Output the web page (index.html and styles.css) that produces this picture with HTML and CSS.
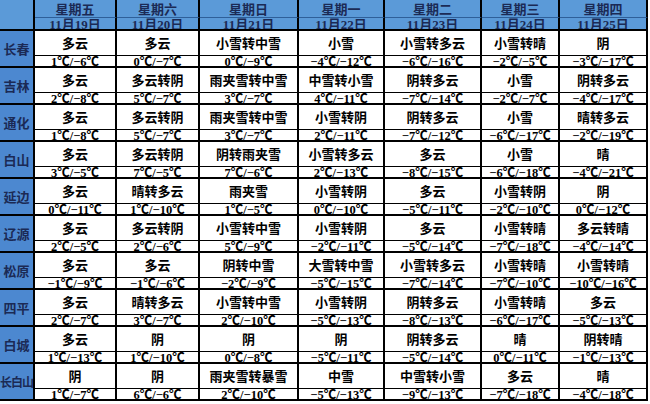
FILE: index.html
```html
<!DOCTYPE html>
<html lang="zh">
<head>
<meta charset="utf-8">
<link rel="stylesheet" href="styles.css">
</head>
<body>
<div class="grid">
  <div class="corner"></div>
  <div class="day">星期五</div><div class="day">星期六</div><div class="day">星期日</div><div class="day">星期一</div><div class="day">星期二</div><div class="day">星期三</div><div class="day">星期四</div>
  <div class="date">11月19日</div><div class="date">11月20日</div><div class="date">11月21日</div><div class="date">11月22日</div><div class="date">11月23日</div><div class="date">11月24日</div><div class="date">11月25日</div>

  <div class="city">长春</div>
  <div class="wx">多云</div><div class="wx">多云</div><div class="wx">小雪转中雪</div><div class="wx">小雪</div><div class="wx">小雪转多云</div><div class="wx">小雪转晴</div><div class="wx">阴</div>
  <div class="tp">1℃/−6℃</div><div class="tp">0℃/−7℃</div><div class="tp">0℃/−9℃</div><div class="tp">−4℃/−12℃</div><div class="tp">−6℃/−16℃</div><div class="tp">−2℃/−5℃</div><div class="tp">−3℃/−17℃</div>

  <div class="city">吉林</div>
  <div class="wx">多云</div><div class="wx">多云转阴</div><div class="wx">雨夹雪转中雪</div><div class="wx">中雪转小雪</div><div class="wx">阴转多云</div><div class="wx">小雪</div><div class="wx">阴转多云</div>
  <div class="tp">2℃/−8℃</div><div class="tp">5℃/−7℃</div><div class="tp">3℃/−7℃</div><div class="tp">4℃/−11℃</div><div class="tp">−7℃/−14℃</div><div class="tp">−2℃/−7℃</div><div class="tp">−4℃/−17℃</div>

  <div class="city">通化</div>
  <div class="wx">多云</div><div class="wx">多云转阴</div><div class="wx">雨夹雪转中雪</div><div class="wx">小雪转阴</div><div class="wx">阴转多云</div><div class="wx">小雪</div><div class="wx">晴转多云</div>
  <div class="tp">1℃/−8℃</div><div class="tp">5℃/−7℃</div><div class="tp">3℃/−7℃</div><div class="tp">2℃/−11℃</div><div class="tp">−7℃/−12℃</div><div class="tp">−6℃/−17℃</div><div class="tp">−2℃/−19℃</div>

  <div class="city">白山</div>
  <div class="wx">多云</div><div class="wx">多云转阴</div><div class="wx">阴转雨夹雪</div><div class="wx">小雪转多云</div><div class="wx">多云</div><div class="wx">小雪</div><div class="wx">晴</div>
  <div class="tp">3℃/−5℃</div><div class="tp">7℃/−5℃</div><div class="tp">7℃/−6℃</div><div class="tp">2℃/−13℃</div><div class="tp">−8℃/−15℃</div><div class="tp">−6℃/−18℃</div><div class="tp">−4℃/−21℃</div>

  <div class="city">延边</div>
  <div class="wx">多云</div><div class="wx">晴转多云</div><div class="wx">雨夹雪</div><div class="wx">小雪转阴</div><div class="wx">多云</div><div class="wx">小雪转阴</div><div class="wx">阴</div>
  <div class="tp">0℃/−11℃</div><div class="tp">1℃/−10℃</div><div class="tp">1℃/−5℃</div><div class="tp">0℃/−10℃</div><div class="tp">−5℃/−11℃</div><div class="tp">−2℃/−10℃</div><div class="tp">0℃/−12℃</div>

  <div class="city">辽源</div>
  <div class="wx">多云</div><div class="wx">多云转阴</div><div class="wx">小雪转中雪</div><div class="wx">小雪转阴</div><div class="wx">多云</div><div class="wx">小雪转晴</div><div class="wx">多云转晴</div>
  <div class="tp">2℃/−5℃</div><div class="tp">2℃/−6℃</div><div class="tp">5℃/−9℃</div><div class="tp">−2℃/−11℃</div><div class="tp">−5℃/−14℃</div><div class="tp">−7℃/−18℃</div><div class="tp">−4℃/−14℃</div>

  <div class="city">松原</div>
  <div class="wx">多云</div><div class="wx">多云</div><div class="wx">阴转中雪</div><div class="wx">大雪转中雪</div><div class="wx">小雪转多云</div><div class="wx">小雪转晴</div><div class="wx">小雪转晴</div>
  <div class="tp">−1℃/−9℃</div><div class="tp">−1℃/−6℃</div><div class="tp">−2℃/−9℃</div><div class="tp">−5℃/−15℃</div><div class="tp">−7℃/−14℃</div><div class="tp">−7℃/−10℃</div><div class="tp">−10℃/−16℃</div>

  <div class="city">四平</div>
  <div class="wx">多云</div><div class="wx">晴转多云</div><div class="wx">小雪转中雪</div><div class="wx">小雪转阴</div><div class="wx">阴转多云</div><div class="wx">小雪转晴</div><div class="wx">多云</div>
  <div class="tp">2℃/−7℃</div><div class="tp">3℃/−7℃</div><div class="tp">2℃/−10℃</div><div class="tp">−5℃/−13℃</div><div class="tp">−8℃/−13℃</div><div class="tp">−6℃/−17℃</div><div class="tp">−5℃/−13℃</div>

  <div class="city">白城</div>
  <div class="wx">多云</div><div class="wx">阴</div><div class="wx">阴</div><div class="wx">阴</div><div class="wx">阴转多云</div><div class="wx">晴</div><div class="wx">阴转晴</div>
  <div class="tp">1℃/−13℃</div><div class="tp">1℃/−10℃</div><div class="tp">0℃/−8℃</div><div class="tp">−5℃/−11℃</div><div class="tp">−5℃/−14℃</div><div class="tp">0℃/−11℃</div><div class="tp">−1℃/−13℃</div>

  <div class="city city-long">长白山</div>
  <div class="wx">阴</div><div class="wx">阴</div><div class="wx">雨夹雪转暴雪</div><div class="wx">中雪</div><div class="wx">中雪转小雪</div><div class="wx">多云</div><div class="wx">晴</div>
  <div class="tp">1℃/−7℃</div><div class="tp">6℃/−6℃</div><div class="tp">2℃/−10℃</div><div class="tp">−5℃/−13℃</div><div class="tp">−9℃/−13℃</div><div class="tp">−7℃/−18℃</div><div class="tp">−4℃/−18℃</div>
</div>
</body>
</html>
```

FILE: styles.css
```css
* { box-sizing: border-box; margin: 0; padding: 0; }
html, body { background: #ffffff; }
body {
  width: 650px;
  height: 404px;
  overflow: hidden;
  font-family: "Noto Sans CJK SC", "Liberation Serif", sans-serif;
  font-weight: 700;
  color: #000;
}
.grid {
  display: grid;
  width: 648px;
  grid-template-columns: 35px 82px 83px 99px 86px 97px 78px 88px;
  grid-template-rows: 18px 13px repeat(10, 25px 12px);
}
.grid > div {
  border-right: 2px solid #000;
  overflow: hidden;
  display: flex;
  justify-content: center;
  white-space: nowrap;
}
.corner {
  grid-row: span 2;
  background: #5b9ad8;
  border-bottom: 2px solid #000;
}
.day {
  background: #5b9ad8;
  border-bottom: 1px solid #2e5f99;
  color: #1b2a55;
  font-size: 13px;
  line-height: 17px;
  align-items: center;
}
.date {
  background: #5b9ad8;
  border-bottom: 2px solid #000;
  color: #1b2a55;
  font-family: "Liberation Serif", "Noto Sans CJK SC", serif;
  font-size: 13px;
  line-height: 14px;
  align-items: flex-start;
}
.city {
  grid-row: span 2;
  background: #4c88d0;
  border-bottom: 2px solid #000;
  color: #1b2a55;
  font-size: 13px;
  align-items: center;
}
.city-long {
  font-size: 12px;
  letter-spacing: -1px;
}
.wx {
  border-bottom: 1px solid #000;
  font-size: 13px;
  line-height: 24px;
  align-items: center;
}
.tp {
  border-bottom: 2px solid #000;
  font-family: "Liberation Serif", "Noto Sans CJK SC", serif;
  font-size: 12.5px;
  line-height: 12px;
  align-items: flex-start;
}
```
